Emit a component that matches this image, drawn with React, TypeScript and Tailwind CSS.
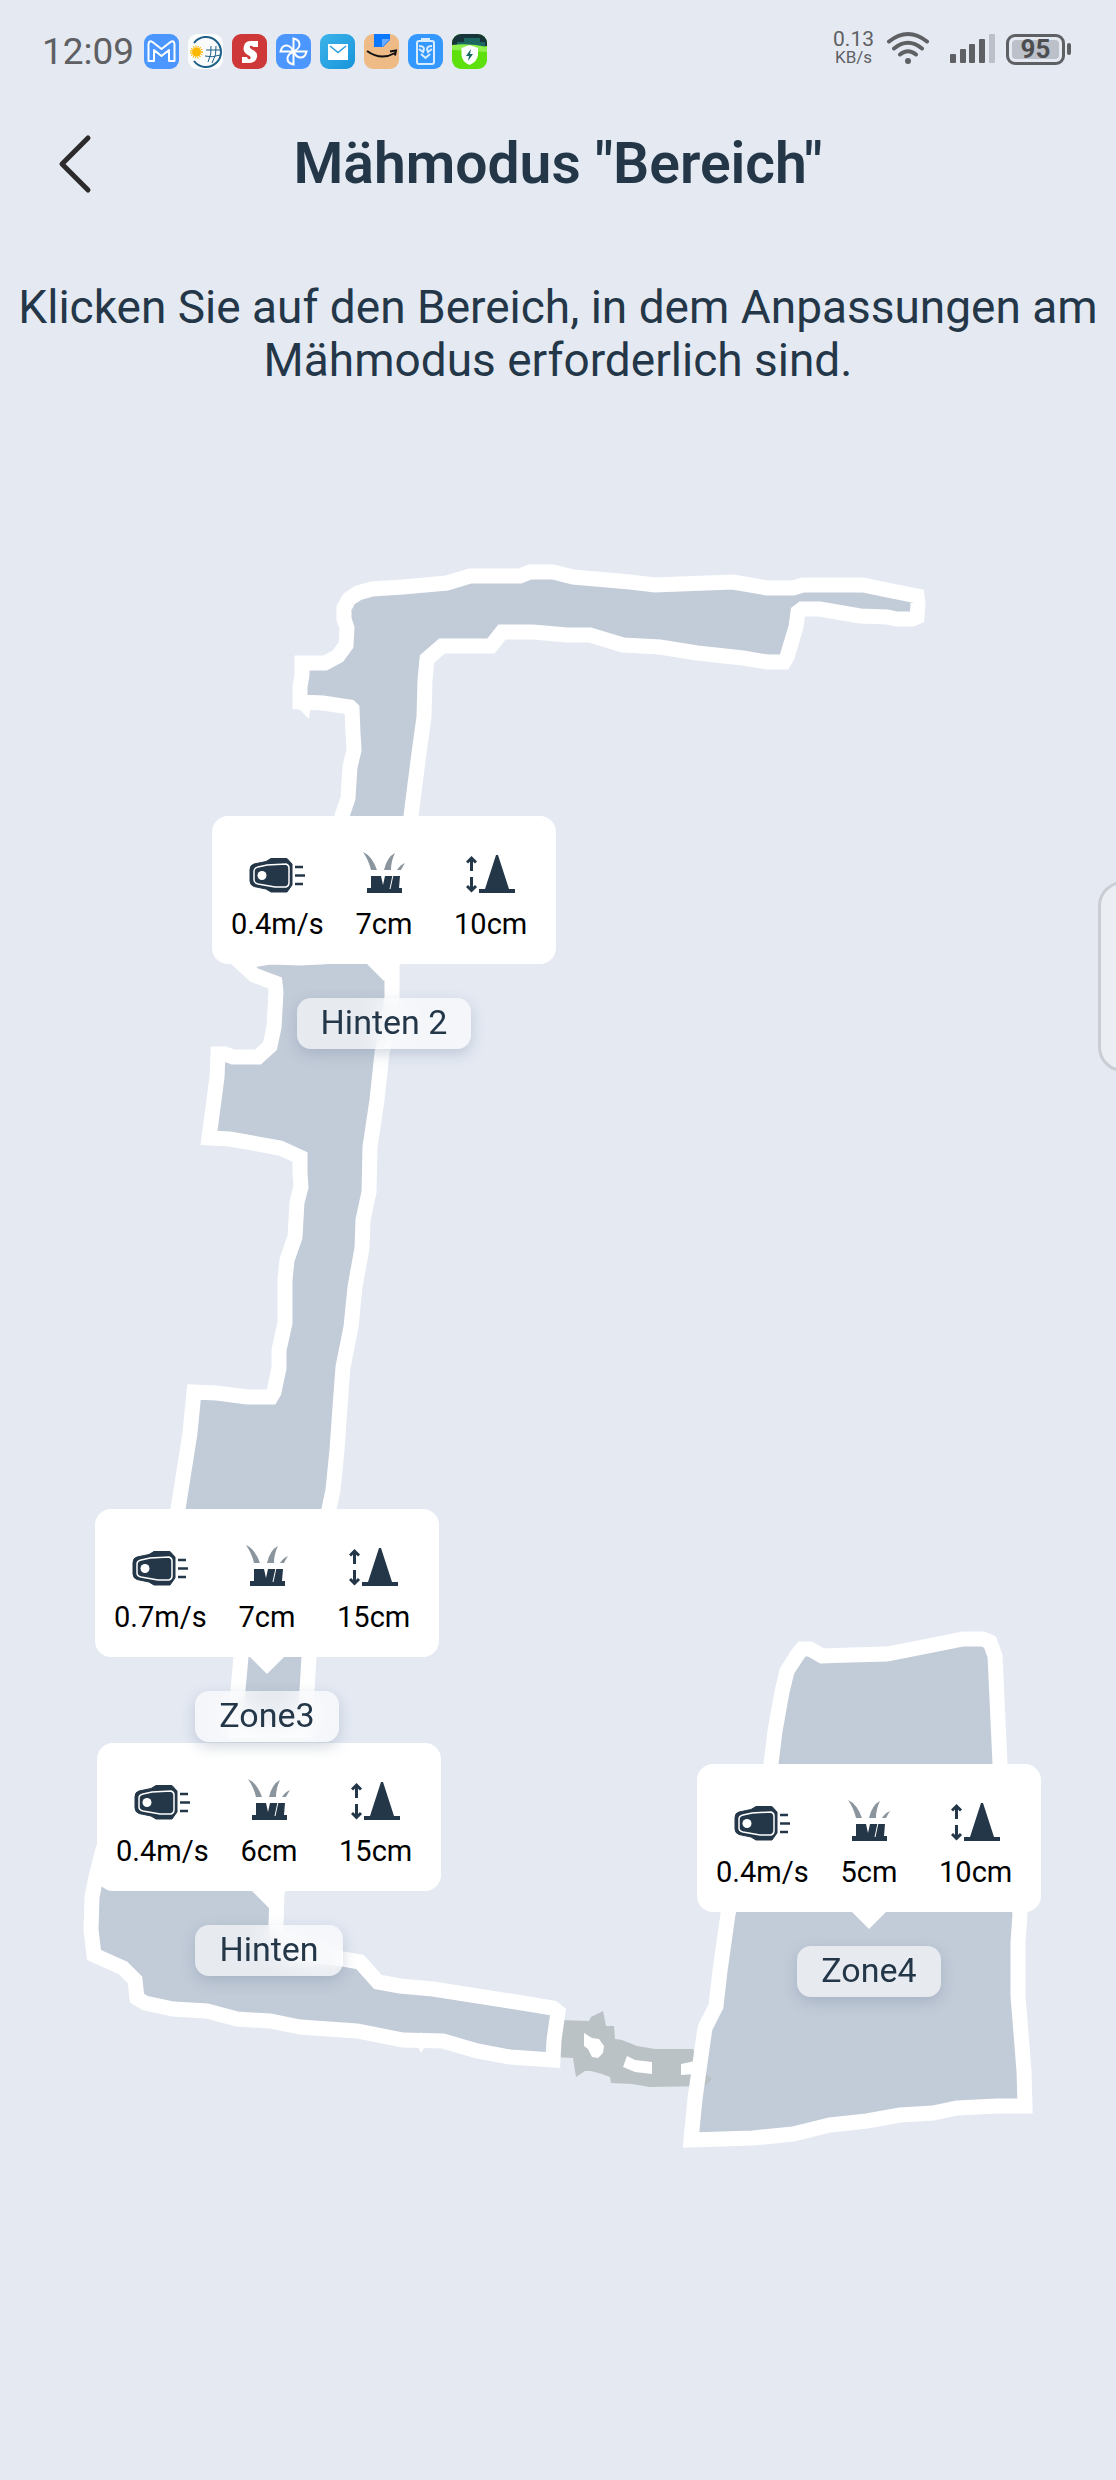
import type { ReactNode } from 'react';

const MAP = { top: 387, width: 1116, height: 2093 };

const zones = [
  { id: 1, name: 'Hinten 2', x: 384, y: 816, speed: '0.4m/s', cut: '7cm', obstacle: '10cm' },
  { id: 2, name: 'Hinten', x: 269, y: 1743, speed: '0.4m/s', cut: '6cm', obstacle: '15cm' },
  { id: 3, name: 'Zone3', x: 267, y: 1509, speed: '0.7m/s', cut: '7cm', obstacle: '15cm' },
  { id: 4, name: 'Zone4', x: 869, y: 1764, speed: '0.4m/s', cut: '5cm', obstacle: '10cm' },
];

const areas = [
  // Hinten 2 + Zone3
  '302,663 325,663 338,656 346,645 347,628 344,619 344,608 349,599 358,593 372,589 403,587 447,583 470,576 520,576 530,572 553,572 573,577 630,582 655,585 680,584 733,582 767,588 793,588 803,585 863,585 887,590 917,596 918,605 917,617 912,619 897,619 887,617 860,616 820,609 802,609 798,612 796,627 787,657 784,662 767,662 743,658 697,653 660,647 623,645 590,635 567,635 533,632 502,632 491,646 442,646 427,659 425,680 424,717 419,753 411,816 398,900 392,960 392,997 388,1025 382,1053 377,1100 370,1147 369,1192 363,1220 362,1248 355,1287 351,1327 343,1367 340,1407 337,1450 333,1490 329,1509 318,1580 309,1657 307,1690 304,1730 235,1730 238,1690 241,1657 230,1580 172,1560 178,1509 190,1433 194,1392 217,1393 247,1397 271,1397 274,1392 279,1368 279,1350 285,1323 285,1280 287,1260 295,1237 297,1202 301,1187 300,1173 300,1157 280,1148 230,1139 209,1138 217,1077 218,1054 225,1054 233,1057 258,1057 270,1046 274,1027 276,992 275,983 254,975 240,962 270,957 300,958 320,957 330,900 342,816 348,798 350,767 354,750 353,733 352,709 350,707 323,703 300,702 300,687 302,675',
  // Hinten
  '110,1830 102,1853 96,1877 92,1897 91,1930 94,1955 123,1968 135,1980 137,1998 145,2003 173,2009 207,2011 237,2019 270,2021 300,2027 357,2031 403,2040 443,2041 477,2051 510,2057 553,2060 554,2040 558,2012 553,2008 510,2001 433,1989 400,1986 378,1982 360,1962 343,1959 300,1954 278,1945 276,1925 277,1892 270,1830',
  // Zone4
  '728,1914 720,1971 716,2006 705,2028 701,2056 695,2099 691,2140 753,2138 793,2134 830,2125 867,2121 900,2115 933,2113 957,2108 997,2106 1025,2106 1024,2071 1018,1996 1018,1942 1020,1914 1000,1764 997,1699 995,1656 990,1642 983,1639 963,1639 933,1645 887,1654 850,1655 822,1656 810,1649 802,1649 798,1654 787,1671 782,1692 775,1731 771,1764',
];

function GardenMap() {
  return (
    <svg viewBox={`0 ${MAP.top} ${MAP.width} ${MAP.height}`} className="block h-auto w-full" aria-hidden="true">
      <g fill="#c2cbd8">
        {areas.map((points, i) => (
          <polygon key={i} points={points} />
        ))}
      </g>
      <polygon
        fill="#bbc2c5"
        points="560,2020 589,2021 591,2017 603,2011 606,2026 614,2026 615,2039 622,2040 637,2046 655,2049 693,2049 705,2073 712,2079 705,2086 650,2087 632,2084 611,2083 610,2077 602,2074 591,2071 585,2071 576,2077 573,2058 556,2057"
      />
      <g fill="#fff">
        <polygon points="584,2033 592,2038 599,2039 604,2046 603,2053 598,2058 592,2057 588,2049 584,2046" />
        <polygon points="627,2056 635,2060 652,2062 652,2074 635,2072 623,2067" />
        <polygon points="681,2064 695,2061 695,2074 681,2075" />
        <polygon points="293,703 309,719 311,704" />
        <polygon points="416,2043 421,2032 427,2043 421,2053" />
      </g>
      <g fill="none" stroke="#fff" strokeWidth="15" strokeLinejoin="miter">
        {areas.map((points, i) => (
          <polygon key={i} points={points} />
        ))}
      </g>
    </svg>
  );
}

function MowerIcon() {
  return (
    <svg viewBox="0 0 56 42" className="h-[42px] w-[56px]" aria-hidden="true">
      <path d="M5 12 17 9.500 22 6.500H38L43 12V33L38 40H22L17 37 5 34.500Q1 33 1 29V17.500Q1 13 5 12Z" fill="#243748" stroke="#243748" />
      <path d="M9 15 18 13 37 12Q40 13 40 16V31Q40 34 37 35H26L9 32Q5 31 5 28V19Q5 16 9 15Z" fill="none" stroke="#fff" strokeWidth="1.500" />
      <circle cx="13" cy="23.500" r="4.500" fill="#fff" />
      <path d="M46 15h8M46 23.500h10M46 32h8" stroke="#243748" strokeWidth="2.500" />
    </svg>
  );
}

function GrassIcon() {
  return (
    <svg viewBox="0 0 42 42" className="h-[42px] w-[42px]" aria-hidden="true">
      <path d="M0 0Q9 4 14 18H8Q6 9 0 0ZM32 1Q28 9 28 18H21Q24 5 32 1ZM42 11Q40 14 38 18H34Q37 13 42 11Z" fill="#8b959e" />
      <path d="M8 24H18L20 33 22 24H37L36 36H39V41H4V36H8Z" fill="#243748" />
      <path d="M30 23 27 37" stroke="#fff" />
    </svg>
  );
}

function ConeIcon() {
  return (
    <svg viewBox="0 0 50 42" className="h-[42px] w-[50px]" aria-hidden="true">
      <path d="M30 3H32L43 37H49V41H13V37H19Z" fill="#243748" />
      <path d="M5.500 19V7M1 10.500 5.500 6 10 10.500M5.500 25V38M1 34 5.500 38.500 10 34" fill="none" stroke="#243748" strokeWidth="3" />
    </svg>
  );
}

function Stat({ icon, value }: { icon: ReactNode; value: string }) {
  return (
    <span className="flex flex-col items-center gap-3">
      {icon}
      <span className="text-[29px] leading-9 text-black">{value}</span>
    </span>
  );
}

function ZonePin({ zone }: { zone: (typeof zones)[number] }) {
  return (
    <button
      type="button"
      className="absolute flex -translate-x-1/2 flex-col items-center"
      style={{
        left: `${(zone.x / MAP.width) * 100}%`,
        top: `${((zone.y - MAP.top) / MAP.height) * 100}%`,
      }}
    >
      <span className="grid w-[344px] grid-cols-3 rounded-2xl bg-white px-3 pt-9 pb-[22px]">
        <Stat icon={<MowerIcon />} value={zone.speed} />
        <Stat icon={<GrassIcon />} value={zone.cut} />
        <Stat icon={<ConeIcon />} value={zone.obstacle} />
      </span>
      <span className="border-x-[17px] border-t-[17px] border-x-transparent border-t-white" />
      <span className="mt-[17px] rounded-[14px] bg-white/60 px-6 pb-[2px] text-[34px] leading-[49px] text-[#243748] shadow-[0_5px_14px_rgba(110,130,155,0.3)] backdrop-blur-md">
        {zone.name}
      </span>
    </button>
  );
}

function AppIcon({ className, children }: { className: string; children: ReactNode }) {
  return (
    <span className={`size-[35px] overflow-hidden rounded-[9px] ${className}`}>
      <svg viewBox="0 0 35 35" className="size-full" fill="none" aria-hidden="true">
        {children}
      </svg>
    </span>
  );
}

function NotificationIcons() {
  return (
    <div className="flex gap-[9px]">
      <AppIcon className="bg-[#4b97ff]">
        <path d="M4.500 27V10Q5 6 8.500 8L17.500 15 26.500 8Q30 6 30.500 10V27H25V16L17.500 22 10 16V27Z" stroke="#fff" strokeWidth="2" strokeLinejoin="round" />
      </AppIcon>
      <AppIcon className="bg-[#fafbfb]">
        <path d="M6 9A15 15 0 1 1 6 27" stroke="#1c5f88" strokeWidth="2" />
        <path d="M18 16H32M17 22Q24 24 32 21M23 12Q24 20 20 28M28 12Q29 21 24 29" stroke="#1c5f88" />
        <circle cx="8.500" cy="18" r="5.500" stroke="#fbb800" strokeWidth="2" strokeDasharray="1 1.200" />
        <circle cx="8.500" cy="18" r="4.500" fill="#fbb800" />
      </AppIcon>
      <AppIcon className="bg-[#cf3838]">
        <path d="M26 7V13H21Q20 11 18 12 17 14 20 15.500 26 18 25 23 24 29 17 29H10V23H15Q16 26 18 25 20 23 16 21 10 18 12 12 13 7 19 7Z" fill="#fff" />
      </AppIcon>
      <AppIcon className="bg-[#4b97ff]">
        <g stroke="#fff" strokeWidth="2">
          <path d="M17.500 17.500V4.500Q24 6 23.500 11 23 15 17.500 17.500Z" />
          <path d="M17.500 17.500H30.500Q29 24 24 23.500 20 23 17.500 17.500Z" />
          <path d="M17.500 17.500V30.500Q11 29 11.500 24 12 20 17.500 17.500Z" />
          <path d="M17.500 17.500H4.500Q6 11 11 11.500 15 12 17.500 17.500Z" />
        </g>
      </AppIcon>
      <AppIcon className="bg-linear-to-br from-[#3cb4ea] to-[#1494da]">
        <path d="M8 10H28V26H8Z" fill="#fff" />
        <path d="m10 12 8 6.500 8-6.500" stroke="#2a9fdc" strokeWidth="1.500" />
      </AppIcon>
      <AppIcon className="bg-[#eebb86]">
        <path d="M10 0H26V6L19 13H10Z" fill="#0a78ff" />
        <path d="M18 5H26L18 13Z" fill="#68acff" />
        <path d="M3 17Q17 27 31 19M26 17.500 32 16.500 31 21.500" stroke="#111" strokeWidth="2" />
      </AppIcon>
      <AppIcon className="bg-[#3398ff]">
        <rect x="9" y="7" width="17" height="23" rx="2" stroke="#d9ecff" strokeWidth="2" />
        <path d="M13 5H22M11 12Q18 12 15 18L11 15M24 12Q17 12 20 18L24 15M13 20 17.500 24 22 20" stroke="#d9ecff" strokeWidth="2" />
      </AppIcon>
      <AppIcon className="bg-[#5ee00c]">
        <path d="M0 0H35V12H0Z" fill="#16343a" />
        <path d="M5 8H12V4H28V8H33V13H5Z" fill="#1c6860" />
        <path d="M0 11Q18 9 35 13V18L0 16Z" fill="#8df04c" />
        <path d="M17.500 11 26 14V21Q25 28 17.500 31 10 28 9.500 21V14Z" fill="#fff" />
        <path d="M19 15 14 22H17L16 27 21 20H18Z" fill="#176a63" />
      </AppIcon>
    </div>
  );
}

function StatusBar() {
  return (
    <div className="flex h-[100px] items-center justify-between pr-[45px] pl-[42px] text-[#5f6063]">
      <div className="flex items-center gap-[10px] pt-[2px]">
        <span className="text-[37px] leading-none">12:09</span>
        <NotificationIcons />
      </div>
      <div className="flex items-center pb-1">
        <div className="flex flex-col items-center">
          <span className="text-[21px] leading-[19px]">0.13</span>
          <span className="text-[17px] leading-[17px]">KB/s</span>
        </div>
        <svg viewBox="0 0 44 34" className="ml-3 h-[34px] w-[44px]" fill="none" stroke="currentColor" strokeWidth="4" strokeLinecap="round" aria-hidden="true">
          <path d="M3 10.500Q22-4.500 41 10.500M8 17.500Q22 6 36 17.500M14 23.500Q22 17 30 23.500" />
          <circle cx="22" cy="30" r="1.500" fill="currentColor" strokeWidth="3" />
        </svg>
        <svg viewBox="0 0 45 30" className="ml-5 h-[30px] w-[45px]" fill="currentColor" aria-hidden="true">
          <rect x="0" y="21" width="6" height="9" rx="1" />
          <rect x="10" y="16" width="6" height="14" rx="1" />
          <rect x="19" y="11" width="6" height="19" rx="1" />
          <rect x="29" y="6" width="6" height="24" rx="1" />
          <rect x="39" y="1" width="6" height="29" rx="1" className="text-[#bcc0c8]" />
        </svg>
        <div className="ml-[11px] flex items-center gap-[2px] pt-[2px]">
          <div className="flex h-[31px] w-[59px] items-center rounded-[9px] border-[3px] border-current p-[3px]">
            <span className="flex h-[19px] w-full items-center justify-center rounded-[4px] bg-[#bcc0c8] text-[26px] font-bold text-[#4c4d50]">
              95
            </span>
          </div>
          <span className="h-3 w-1 rounded-sm bg-current" />
        </div>
      </div>
    </div>
  );
}

export default function App() {
  return (
    <div className="relative min-h-screen overflow-hidden bg-[#e4e9f2] font-[Roboto,sans-serif]">
      <StatusBar />

      <header className="grid h-[128px] grid-cols-[1fr_auto_1fr] items-center px-12">
        <button type="button" aria-label="Zurück" className="justify-self-start p-2">
          <svg viewBox="0 0 38 60" className="h-[60px] w-[38px]" fill="none" stroke="#2d2a2b" strokeWidth="5" strokeLinecap="round" strokeLinejoin="round" aria-hidden="true">
            <path d="M32 4 6 30 32 56" />
          </svg>
        </button>
        <h1 className="text-[57px] leading-[64px] font-semibold text-[#243748]">Mähmodus "Bereich"</h1>
      </header>

      <p className="px-4 pt-[53px] text-center text-[46px] leading-[53px] text-[#243748]">
        Klicken Sie auf den Bereich, in dem Anpassungen am Mähmodus erforderlich sind.
      </p>

      <main className="relative">
        <GardenMap />
        {zones.map((zone) => (
          <ZonePin key={zone.id} zone={zone} />
        ))}
      </main>

      <div className="absolute top-[881px] -right-8 h-[191px] w-[50px] rounded-[28px] border-[3px] border-[#cacdd4] bg-[#ebeff4]" />
    </div>
  );
}
